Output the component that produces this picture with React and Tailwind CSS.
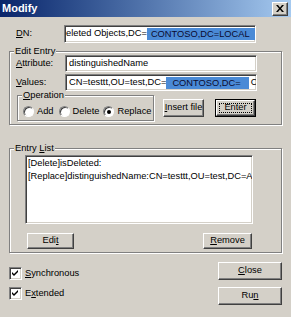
import React from "react";

const sunken =
  "bg-white border border-t-[#808080] border-l-[#808080] border-b-white border-r-white shadow-[inset_1px_1px_0_#404040,inset_-1px_-1px_0_#d4d0c8]";
const raised =
  "bg-[#d4d0c8] border border-t-white border-l-white border-b-[#404040] border-r-[#404040] shadow-[inset_-1px_-1px_0_#808080]";

function U({ children }) {
  return <span className="underline underline-offset-[1px]">{children}</span>;
}

function Group({ label, className, children }) {
  return (
    <div
      className={
        "relative border border-[#808080] shadow-[1px_1px_0_#fff,inset_1px_1px_0_#fff] " +
        className
      }
    >
      <span className="absolute left-[4px] top-[-7px] bg-[#d4d0c8] px-[1px] leading-[12px]">
        {label}
      </span>
      {children}
    </div>
  );
}

function Radio({ checked, label, className }) {
  return (
    <div className={"flex items-center " + (className || "")}>
      <div className="w-[11px] h-[11px] rounded-full bg-white border border-t-[#808080] border-l-[#808080] border-b-white border-r-white shadow-[inset_1px_1px_0_#404040] flex items-center justify-center">
        {checked && <div className="w-[4px] h-[4px] rounded-full bg-black" />}
      </div>
      <span className="ml-[3px]">{label}</span>
    </div>
  );
}

function Check({ label }) {
  return (
    <div className="flex items-center">
      <div className={"w-[13px] h-[13px] flex items-center justify-center " + sunken}>
        <svg width="7" height="7" viewBox="0 0 7 7">
          <path d="M0 2 L2 4 L6 0 L6 2 L2 6 L0 4 Z" fill="#000" />
        </svg>
      </div>
      <span className="ml-[3px]">{label}</span>
    </div>
  );
}

export default function App() {
  return (
    <div
      className="w-[291px] h-[317px] bg-[#d4d0c8] text-black text-[9.3px] overflow-hidden whitespace-nowrap"
      style={{ fontFamily: '"Liberation Sans", Arial, sans-serif' }}
    >
      {/* Title bar */}
      <div className="h-[17px] flex items-center justify-between pl-[2px] pr-[3px] bg-gradient-to-r from-[#0a246a] to-[#a6caf0]">
        <span className="text-white font-bold text-[11px]">Modify</span>
        <div className={"w-[16px] h-[14px] flex items-center justify-center " + raised}>
          <svg width="8" height="7" viewBox="0 0 8 7">
            <path d="M0 0 L2 0 L4 2.5 L6 0 L8 0 L5 3.5 L8 7 L6 7 L4 4.5 L2 7 L0 7 L3 3.5 Z" fill="#000" />
          </svg>
        </div>
      </div>

      <div className="pl-[9px]">
        {/* DN row */}
        <div className="mt-[8px] flex items-center">
          <span className="w-[55px] pl-[7px]">
            <U>D</U>N:
          </span>
          <div className={"w-[192px] h-[18px] flex items-center overflow-hidden pl-[3px] " + sunken}>
            <span className="ml-[-2px]">eleted Objects,DC=</span>
            <span className="bg-[#4a8ad6] text-[#0a0a30] h-[12px] leading-[12px] pl-[4px] pr-[5px]">
              CONTOSO,DC=LOCAL
            </span>
          </div>
        </div>

        {/* Edit Entry */}
        <Group label="Edit Entry" className="mt-[8px] w-[273px] h-[74px]">
          <div className="mt-[3px] flex items-center">
            <span className="w-[55px] pl-[6px]">
              <U>A</U>ttribute:
            </span>
            <div className={"w-[192px] h-[17px] flex items-center pl-[3px] " + sunken}>
              distinguishedName
            </div>
          </div>
          <div className="mt-[2px] flex items-center">
            <span className="w-[55px] pl-[6px]">
              <U>V</U>alues:
            </span>
            <div className={"w-[192px] h-[17px] flex items-center overflow-hidden pl-[3px] " + sunken}>
              <span>CN=testtt,OU=test,DC=</span>
              <span className="bg-[#4a8ad6] text-[#0a0a30] h-[12px] leading-[12px] pl-[6px] pr-[8px]">
                CONTOSO,DC=
              </span>
              <span className="ml-[2px]">C</span>
            </div>
          </div>
          <div className="flex items-start mt-[4px]">
            <Group label={<><U>O</U>peration</>} className="ml-[7px] w-[137px] h-[26px]">
              <div className="flex items-center mt-[9px] ml-[5px]">
                <Radio label="Add" />
                <Radio label="Delete" className="ml-[5px]" />
                <Radio label="Replace" checked className="ml-[4px]" />
              </div>
            </Group>
            <div className={"ml-[9px] mt-[4px] w-[41px] h-[18px] flex items-center justify-center " + raised}>
              <span>
                <U>I</U>nsert file
              </span>
            </div>
            <div className="ml-[11px] mt-[4px] w-[41px] h-[18px] border border-black">
              <div className={"w-full h-full p-[2px] " + raised}>
                <div className="w-full h-full border border-dotted border-black flex items-center justify-center">
                  Enter
                </div>
              </div>
            </div>
          </div>
        </Group>

        {/* Entry List */}
        <Group
          label={
            <>
              Entry <U>L</U>ist
            </>
          }
          className="mt-[23px] w-[273px] h-[105px]"
        >
          <div className={"ml-[15px] mt-[6px] w-[228px] h-[69px] pl-[2px] pt-[1px] overflow-hidden leading-[13px] " + sunken}>
            <div>[Delete]isDeleted:</div>
            <div>[Replace]distinguishedName:CN=testtt,OU=test,DC=A</div>
          </div>
          <div className="flex mt-[9px]">
            <div className={"ml-[17px] w-[47px] h-[16px] flex items-center justify-center " + raised}>
              <span>
                Edi<U>t</U>
              </span>
            </div>
            <div className={"ml-[129px] w-[49px] h-[16px] flex items-center justify-center " + raised}>
              <span>
                <U>R</U>emove
              </span>
            </div>
          </div>
        </Group>

        {/* Bottom */}
        <div className="flex mt-[9px]">
          <div className="flex flex-col gap-[6px] mt-[5px]">
            <Check
              label={
                <>
                  <U>S</U>ynchronous
                </>
              }
            />
            <Check
              label={
                <>
                  E<U>x</U>tended
                </>
              }
            />
          </div>
          <div className="ml-auto mr-[9px] flex flex-col gap-[7px]">
            <div className={"w-[64px] h-[18px] flex items-center justify-center " + raised}>
              <span>
                <U>C</U>lose
              </span>
            </div>
            <div className={"w-[64px] h-[18px] flex items-center justify-center " + raised}>
              <span>
                Ru<U>n</U>
              </span>
            </div>
          </div>
        </div>
      </div>
    </div>
  );
}
